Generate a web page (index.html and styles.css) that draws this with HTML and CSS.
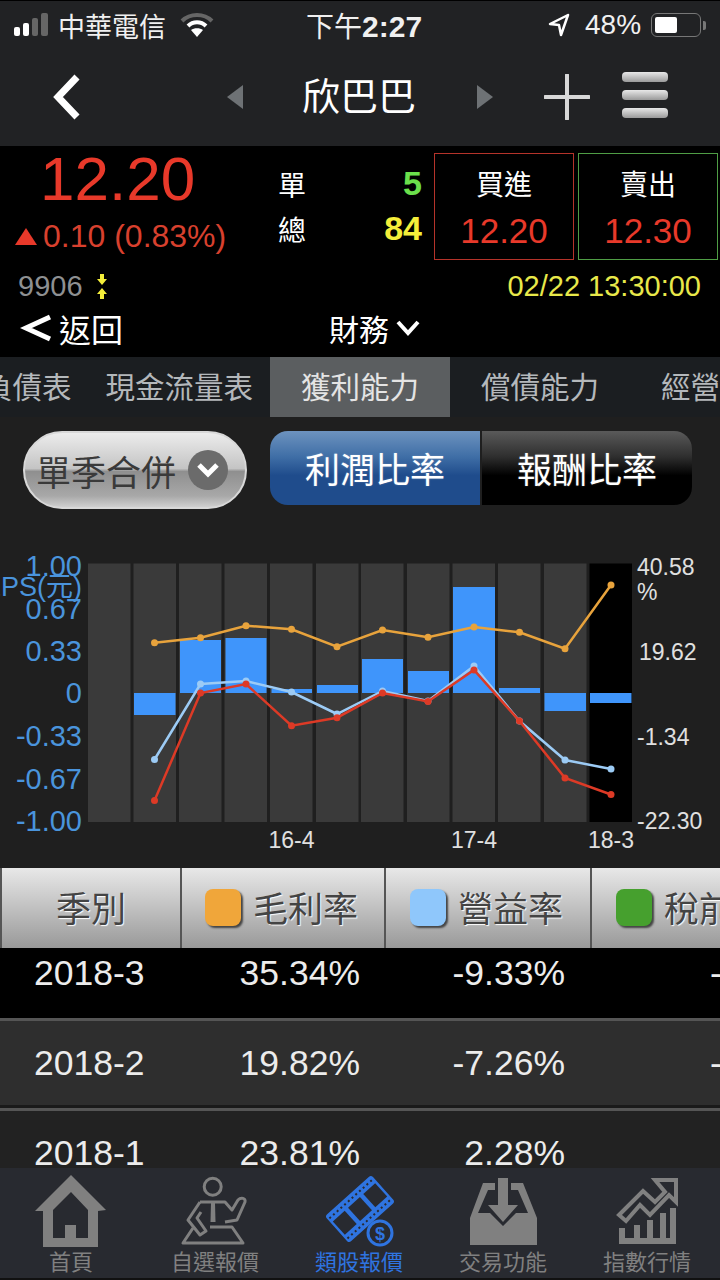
FILE: index.html
```html
<!DOCTYPE html>
<html lang="zh-Hant">
<head>
    <meta charset="UTF-8">
    <meta name="viewport" content="width=device-width, initial-scale=1.0">
    <title>欣巴巴</title>
    <link rel="stylesheet" href="styles.css">
</head>
<body>
<div class="page">

    <!-- status bar -->
    <div class="status">
        <svg class="signal" width="38" height="26" viewBox="0 0 38 26">
            <rect x="0" y="15" width="6" height="9" rx="2" fill="#fff"/>
            <rect x="9" y="11" width="6" height="13" rx="2" fill="#fff"/>
            <rect x="18" y="6" width="6" height="18" rx="2" fill="#666"/>
            <rect x="27" y="1" width="7" height="23" rx="2" fill="#666"/>
        </svg>
        <span class="carrier">中華電信</span>
        <svg class="wifi" width="34" height="26" viewBox="0 0 34 26">
            <path d="M2 9 C10 1 24 1 32 9" fill="none" stroke="#666" stroke-width="4"/>
            <path d="M8 14 C13 9 21 9 26 14" fill="none" stroke="#fff" stroke-width="4"/>
            <path d="M17 25 L11 18 C14 15.500 20 15.500 23 18 Z" fill="#fff"/>
        </svg>
        <span class="clock">下午<b>2:27</b></span>
        <svg class="locate" width="22" height="26" viewBox="0 0 22 26">
            <path d="M20 3 L2 12 L11 13 L13 23 Z" fill="none" stroke="#fff" stroke-width="2.500" stroke-linejoin="round"/>
        </svg>
        <span class="percent">48%</span>
        <div class="battery"><div class="battery_fill"></div></div>
        <div class="battery_tip"></div>
    </div>

    <!-- title bar -->
    <nav class="topnav">
        <svg class="nav_back" width="30" height="46" viewBox="0 0 30 46">
            <path d="M25 3 L6 23 L25 43" fill="none" stroke="#fff" stroke-width="7"/>
        </svg>
        <div class="arrow_left"></div>
        <div class="stock_name">欣巴巴</div>
        <div class="arrow_right"></div>
        <svg class="plus" width="46" height="46" viewBox="0 0 46 46">
            <path d="M23 1 V45 M1 23 H45" stroke="#d8d8d8" stroke-width="4" stroke-linecap="round"/>
        </svg>
        <div class="burger">
            <div class="burger_line"></div>
            <div class="burger_line"></div>
            <div class="burger_line"></div>
        </div>
    </nav>

    <!-- quote -->
    <div class="quote">
        <div class="quote_top">
            <div class="price_box">
                <div class="price">12.20</div>
                <div class="change"><span class="change_up"></span>0.10 (0.83%)</div>
            </div>
            <div class="volume">
                <div class="volume_row"><span>單</span><span class="vol_num green">5</span></div>
                <div class="volume_row"><span>總</span><span class="vol_num yellow">84</span></div>
            </div>
            <div class="trade trade_buy">
                <div class="trade_label">買進</div>
                <div class="trade_price">12.20</div>
            </div>
            <div class="trade trade_sell">
                <div class="trade_label">賣出</div>
                <div class="trade_price">12.30</div>
            </div>
        </div>
        <div class="quote_info">
            <span class="code">9906</span>
            <svg class="code_arrows" width="12" height="25" viewBox="0 0 12 25">
                <path d="M4 0 H8 V5 H11 L6 11 L1 5 H4 Z M6 14 L11 20 H8 V25 H4 V20 H1 Z" fill="#f4ee3a"/>
            </svg>
            <span class="datetime">02/22 13:30:00</span>
        </div>
        <div class="quote_bar">
            <svg class="back_icon" width="32" height="28" viewBox="0 0 32 28">
                <path d="M30 3 L6 14 L30 25" fill="none" stroke="#fff" stroke-width="5"/>
            </svg>
            <span class="back_text">返回</span>
            <span class="finance">財務</span>
            <svg class="finance_icon" width="26" height="18" viewBox="0 0 26 18">
                <path d="M3 3 L13 14 L23 3" fill="none" stroke="#fff" stroke-width="4"/>
            </svg>
        </div>
    </div>

    <!-- tabs -->
    <div class="tabs">
        <div class="tab">負債表</div>
        <div class="tab">現金流量表</div>
        <div class="tab tab_wide active">獲利能力</div>
        <div class="tab tab_wide">償債能力</div>
        <div class="tab tab_wide">經營能力</div>
    </div>

    <!-- filter -->
    <div class="filter">
        <div class="pill">
            <span>單季合併</span>
            <div class="pill_icon">
                <svg width="24" height="16" viewBox="0 0 24 16">
                    <path d="M3 3 L12 12 L21 3" fill="none" stroke="#fff" stroke-width="5"/>
                </svg>
            </div>
        </div>
        <div class="segment">
            <div class="seg seg_on">利潤比率</div>
            <div class="seg seg_off">報酬比率</div>
        </div>
    </div>

    <!-- chart, svg coordinates follow the page -->
    <svg class="chart" width="720" height="323" viewBox="0 545 720 323">
        <g fill="#3a3a3a">
            <rect x="88" y="563.500" width="42.500" height="258.500"/>
            <rect x="133.500" y="563.500" width="42.500" height="258.500"/>
            <rect x="179" y="563.500" width="42.500" height="258.500"/>
            <rect x="224.500" y="563.500" width="42.500" height="258.500"/>
            <rect x="270" y="563.500" width="42.500" height="258.500"/>
            <rect x="316" y="563.500" width="42.500" height="258.500"/>
            <rect x="361" y="563.500" width="42.500" height="258.500"/>
            <rect x="407" y="563.500" width="42.500" height="258.500"/>
            <rect x="452.500" y="563.500" width="42.500" height="258.500"/>
            <rect x="498" y="563.500" width="42.500" height="258.500"/>
            <rect x="544" y="563.500" width="42.500" height="258.500"/>
            <rect x="589.500" y="563.500" width="42.500" height="258.500" fill="#000"/>
        </g>
        <g fill="#3f95fb">
            <rect x="134" y="693" width="41.500" height="22"/>
            <rect x="180" y="640" width="41" height="53"/>
            <rect x="225.500" y="638" width="41" height="55"/>
            <rect x="271.500" y="689" width="40.500" height="4"/>
            <rect x="317" y="685" width="41" height="8"/>
            <rect x="362" y="659" width="41" height="34"/>
            <rect x="408" y="671" width="41" height="22"/>
            <rect x="453" y="587" width="42" height="106"/>
            <rect x="499" y="688" width="41" height="5"/>
            <rect x="544.500" y="693" width="41.500" height="18"/>
            <rect x="590" y="693" width="41.500" height="10"/>
        </g>
        <g class="line" stroke="#e8a33c" fill="#e8a33c">
            <polyline points="154.500,642.700 200.500,637.700 246,625.700 291.500,629.300 337,646.700 382.500,630 428,637.300 474,627 519.500,632.300 565,648.700 611,585"/>
            <circle cx="154.500" cy="642.700" r="3.500"/><circle cx="200.500" cy="637.700" r="3.500"/>
            <circle cx="246" cy="625.700" r="3.500"/><circle cx="291.500" cy="629.300" r="3.500"/>
            <circle cx="337" cy="646.700" r="3.500"/><circle cx="382.500" cy="630" r="3.500"/>
            <circle cx="428" cy="637.300" r="3.500"/><circle cx="474" cy="627" r="3.500"/>
            <circle cx="519.500" cy="632.300" r="3.500"/><circle cx="565" cy="648.700" r="3.500"/>
            <circle cx="611" cy="585" r="3.500"/>
        </g>
        <g class="line" stroke="#9ccbf5" fill="#9ccbf5">
            <polyline points="154.500,759.500 200.500,684 246,681 291.500,692 337,714 382.500,691 428,701 474,666 519.500,721 565,760 611,769"/>
            <circle cx="154.500" cy="759.500" r="3.500"/><circle cx="200.500" cy="684" r="3.500"/>
            <circle cx="246" cy="681" r="3.500"/><circle cx="291.500" cy="692" r="3.500"/>
            <circle cx="337" cy="714" r="3.500"/><circle cx="382.500" cy="691" r="3.500"/>
            <circle cx="428" cy="701" r="3.500"/><circle cx="474" cy="666" r="3.500"/>
            <circle cx="519.500" cy="721" r="3.500"/><circle cx="565" cy="760" r="3.500"/>
            <circle cx="611" cy="769" r="3.500"/>
        </g>
        <g class="line" stroke="#dd3a26" fill="#dd3a26">
            <polyline points="154.500,800.500 200.500,693 246,684 291.500,725.700 337,717.700 382.500,693 428,701.500 474,670 519.500,721 565,778 611,794.500"/>
            <circle cx="154.500" cy="800.500" r="3.500"/><circle cx="200.500" cy="693" r="3.500"/>
            <circle cx="246" cy="684" r="3.500"/><circle cx="291.500" cy="725.700" r="3.500"/>
            <circle cx="337" cy="717.700" r="3.500"/><circle cx="382.500" cy="693" r="3.500"/>
            <circle cx="428" cy="701.500" r="3.500"/><circle cx="474" cy="670" r="3.500"/>
            <circle cx="519.500" cy="721" r="3.500"/><circle cx="565" cy="778" r="3.500"/>
            <circle cx="611" cy="794.500" r="3.500"/>
        </g>
        <g class="axis_left">
            <text x="82" y="576">1.00</text>
            <text class="axis_unit" x="82" y="596">EPS(元)</text>
            <text x="82" y="619">0.67</text>
            <text x="82" y="661">0.33</text>
            <text x="82" y="703">0</text>
            <text x="82" y="746">-0.33</text>
            <text x="82" y="789">-0.67</text>
            <text x="82" y="831">-1.00</text>
        </g>
        <g class="axis_right">
            <text x="637" y="575">40.58</text>
            <text x="637" y="600">%</text>
            <text x="639" y="660">19.62</text>
            <text x="637" y="745">-1.34</text>
            <text x="637" y="829">-22.30</text>
        </g>
        <g class="axis_bottom">
            <text x="291.500" y="848">16-4</text>
            <text x="474" y="848">17-4</text>
            <text x="611" y="848">18-3</text>
        </g>
    </svg>

    <!-- table -->
    <div class="table_head">
        <div class="th th_season">季別</div>
        <div class="th th_col"><span class="swatch orange"></span>毛利率</div>
        <div class="th th_col th_col3"><span class="swatch sky"></span>營益率</div>
        <div class="th th_col th_col3"><span class="swatch leaf"></span>稅前淨利率</div>
    </div>
    <div class="table_body">
        <div class="row row_black">
            <div class="cell_season">2018-3</div>
            <div class="cell_num">35.34%</div>
            <div class="cell_num">-9.33%</div>
            <div class="cell_cut">-</div>
        </div>
        <div class="row row_grey">
            <div class="cell_season">2018-2</div>
            <div class="cell_num">19.82%</div>
            <div class="cell_num">-7.26%</div>
            <div class="cell_cut">-</div>
        </div>
        <div class="row row_dark">
            <div class="cell_season">2018-1</div>
            <div class="cell_num">23.81%</div>
            <div class="cell_num">2.28%</div>
            <div class="cell_cut"></div>
        </div>
    </div>

    <!-- bottom tab bar -->
    <div class="bottom">
        <div class="bottom_item">
            <svg width="80" height="74" viewBox="0 0 80 74">
                <path fill="#808080" fill-rule="evenodd" d="M40 1 L75 36 L67 37 V73 H12 V37 H4 Z M40 18 L22 36 V64 H34 V51 H45 V64 H57 V36 Z"/>
            </svg>
            <span>首頁</span>
        </div>
        <div class="bottom_item">
            <svg width="80" height="74" viewBox="175 1174 80 74">
                <g fill="none" stroke="#808080" stroke-width="3" stroke-linejoin="round">
                    <circle cx="212.700" cy="1186.700" r="8.500"/>
                    <path d="M200 1202 H225 L232 1210 L238 1200 C241 1197 246 1198 245 1202 L237 1220 L225 1222"/>
                    <path d="M200 1202 L188 1220 L200 1235 L206 1231 L197 1218 L201 1212"/>
                    <path d="M193 1228 L183 1243 H243 L232 1227 H210"/>
                </g>
                <path d="M211 1203 H215 L215.500 1222 H210.500 Z" fill="#808080"/>
            </svg>
            <span>自選報價</span>
        </div>
        <div class="bottom_item bottom_on">
            <svg width="80" height="74" viewBox="319 1174 80 74">
                <g transform="rotate(-42 360 1209)">
                    <rect x="329" y="1191" width="62" height="36" rx="3" fill="#2f74e0"/>
                    <rect x="331.500" y="1200" width="16" height="18" fill="#282a30"/>
                    <rect x="352" y="1200" width="16" height="18" fill="#282a30"/>
                    <rect x="372.500" y="1200" width="16" height="18" fill="#282a30"/>
                    <path d="M331 1195.500 H389 M331 1222.500 H389" stroke="#282a30" stroke-width="2" stroke-dasharray="2 3"/>
                </g>
                <circle cx="380" cy="1233" r="12" fill="#282a30" stroke="#2f74e0" stroke-width="3"/>
                <text class="dollar" x="380" y="1240">$</text>
            </svg>
            <span>類股報價</span>
        </div>
        <div class="bottom_item">
            <svg width="80" height="74" viewBox="463 1174 80 74">
                <path fill="#808080" d="M470 1245 V1218 L483 1183 H495 V1190 H488 L478 1213 H490 L503 1226 L516 1213 H528 L518 1190 H511 V1183 H523 L537 1218 V1245 Z"/>
                <path fill="#808080" d="M498 1178 H508 V1205 H518 L503 1222 L488 1205 H498 Z"/>
            </svg>
            <span>交易功能</span>
        </div>
        <div class="bottom_item">
            <svg width="80" height="74" viewBox="607 1174 80 74">
                <path fill="none" stroke="#808080" stroke-width="4" d="M619 1215 L643 1191 L655 1202 L665 1192 L655 1180 H676 V1202 L669 1195 L650 1215 L640 1205 L626 1221 Z"/>
                <path fill="#808080" d="M619 1228 H625 V1238 H634 V1225 H640 V1238 H647 V1220 H653 V1238 H660 V1213 H666 V1238 H670 V1208 H676 V1244 H619 Z"/>
            </svg>
            <span>指數行情</span>
        </div>
    </div>

</div>
</body>
</html>
```

FILE: styles.css
```css
*{
    box-sizing: border-box;
}
body{
    margin: 0;
    background-color: #1f1f1f;
    font-family: "Liberation Sans", "Noto Sans CJK TC", sans-serif;
    color: #fff;
}
.page{
    width: 720px;
    height: 1280px;
    overflow: hidden;
}

/* status bar */
.status{
    height: 52px;
    padding: 0 0 3px 14px;
    background-color: #212224;
    border-top: 1px solid #000;
    display: flex;
    align-items: center;
    font-size: 27px;
    color: #f0f0f0;
}
.carrier{
    margin-left: 6px;
    width: 108px;
}
.wifi{
    margin-left: 14px;
}
.clock{
    margin-left: 92px;
    width: 122px;
    font-size: 28px;
}
.clock b{
    font-size: 30px;
    font-weight: bold;
}
.locate{
    margin-left: 120px;
}
.percent{
    margin-left: 15px;
    font-size: 28px;
}
.battery{
    width: 50px;
    height: 24px;
    margin-left: 10px;
    padding: 3px;
    border: 1.5px solid #777;
    border-radius: 6px;
}
.battery_fill{
    width: 22px;
    height: 100%;
    background-color: #fff;
    border-radius: 2px;
}
.battery_tip{
    width: 3px;
    height: 9px;
    margin-left: 2px;
    background-color: #777;
    border-radius: 0 2px 2px 0;
}

/* title bar */
.topnav{
    height: 94px;
    padding-bottom: 5px;
    background-color: #212224;
    display: flex;
    align-items: center;
}
.nav_back{
    margin-left: 52px;
}
.arrow_left{
    margin-left: 145px;
    border-right: 16px solid #6e7275;
    border-top: 12px solid transparent;
    border-bottom: 12px solid transparent;
}
.stock_name{
    width: 114px;
    margin-left: 59px;
    font-size: 38px;
    line-height: 50px;
    white-space: nowrap;
}
.arrow_right{
    margin-left: 61px;
    border-left: 16px solid #6e7275;
    border-top: 12px solid transparent;
    border-bottom: 12px solid transparent;
}
.plus{
    margin-left: 51px;
}
.burger{
    width: 46px;
    margin-left: 32px;
    margin-bottom: 3px;
    display: flex;
    flex-direction: column;
    gap: 8px;
}
.burger_line{
    height: 10px;
    border-radius: 4px;
    background: linear-gradient(#e8e8e8, #9a9a9a);
}

/* quote */
.quote{
    height: 211px;
    background-color: #000;
    padding-top: 7px;
}
.quote_top{
    display: flex;
    height: 107px;
}
.price_box{
    width: 278px;
}
.price{
    margin-top: -3px;
    margin-left: 40px;
    font-size: 62px;
    line-height: 58px;
    color: #e8392a;
}
.change{
    margin-top: 9px;
    margin-left: 15px;
    font-size: 32px;
    line-height: 38px;
    color: #d8402e;
    display: flex;
    align-items: center;
    white-space: nowrap;
}
.change_up{
    margin-right: 6px;
    border-bottom: 17px solid #e8392a;
    border-left: 11px solid transparent;
    border-right: 11px solid transparent;
}
.volume{
    width: 144px;
    padding-top: 8px;
    font-size: 28px;
}
.volume_row{
    height: 45px;
    display: flex;
    justify-content: space-between;
    align-items: center;
}
.vol_num{
    font-size: 34px;
    font-weight: bold;
}
.green{
    color: #6be04c;
}
.yellow{
    color: #f4ee3a;
}
.trade{
    width: 140px;
    border: 1px solid;
    text-align: center;
}
.trade_buy{
    margin-left: 12px;
    border-color: #b5332a;
}
.trade_sell{
    margin-left: 4px;
    border-color: #4f9d45;
}
.trade_label{
    margin-top: 9px;
    font-size: 28px;
    line-height: 46px;
}
.trade_price{
    font-size: 35px;
    line-height: 44px;
    color: #e8392a;
}
.quote_info{
    height: 34px;
    margin-top: 9px;
    padding: 0 19px 0 18px;
    font-size: 29px;
    display: flex;
    align-items: center;
}
.code{
    color: #8e9092;
}
.code_arrows{
    margin-left: 13px;
}
.datetime{
    margin-left: auto;
    color: #e8e84a;
}
.quote_bar{
    height: 46px;
    margin-top: 2px;
    display: flex;
    align-items: center;
}
.back_icon{
    margin-left: 20px;
}
.back_text{
    margin-left: 7px;
    font-size: 32px;
}
.finance{
    margin-left: 206px;
    font-size: 30px;
}
.finance_icon{
    margin-left: 6px;
}

/* tabs */
.tabs{
    height: 60px;
    margin-left: -34px;
    width: 900px;
    background-color: #1b1e21;
    display: flex;
    align-items: stretch;
    font-size: 29.500px;
    color: #b4b8bb;
}
.tab{
    padding: 0 17px;
    line-height: 62px;
    white-space: nowrap;
}
.tab_wide{
    padding: 0 31px;
}
.active{
    background-color: #5b5e60;
    color: #e4e4e4;
}

/* filter */
.filter{
    height: 128px;
    padding: 14px 0 0 23px;
    display: flex;
    align-items: flex-start;
    background-color: #1f1f1f;
}
.pill{
    width: 224px;
    height: 78px;
    padding: 0 17px 0 11px;
    border: 2px solid #d8d8d8;
    border-radius: 39px;
    background: linear-gradient(#ececec 0%, #c4c4c4 48%, #8f8f8f 52%, #a8a8a8 85%, #cfcfcf 100%);
    display: flex;
    align-items: center;
    justify-content: space-between;
    font-size: 35px;
    color: #3a3a3a;
}
.pill_icon{
    width: 40px;
    height: 40px;
    border-radius: 50%;
    background-color: #6b6b6b;
    display: flex;
    align-items: center;
    justify-content: center;
}
.segment{
    width: 422px;
    height: 74px;
    margin-left: 23px;
    display: flex;
    gap: 2px;
    font-size: 35px;
}
.seg{
    flex: 1;
    text-align: center;
    line-height: 80px;
    text-shadow: 0 0 2px rgba(255, 255, 255, 0.25);
}
.seg_on{
    border-radius: 18px 0 0 18px;
    background: linear-gradient(#6d93bf 0%, #3f6ea6 35%, #1f4c8c 60%, #1f4c8c 100%);
}
.seg_off{
    border-radius: 0 18px 18px 0;
    background: linear-gradient(#5a5a5a 0%, #2e2e2e 35%, #000 60%, #000 100%);
}

/* chart */
.chart{
    display: block;
}
.line polyline{
    fill: none;
    stroke-width: 2.500;
}
.line circle{
    stroke: none;
}
.axis_left text{
    font-size: 29px;
    fill: #4a94dc;
    text-anchor: end;
}
.axis_left .axis_unit{
    font-size: 27px;
}
.axis_right text{
    font-size: 23px;
    fill: #e0e0e0;
}
.axis_bottom text{
    font-size: 23px;
    fill: #e0e0e0;
    text-anchor: middle;
}

/* table */
.table_head{
    height: 80px;
    padding-left: 2px;
    display: flex;
    gap: 2px;
    overflow: hidden;
    background-color: #555;
    color: #444;
    font-size: 35px;
}
.th{
    height: 80px;
    padding-bottom: 4px;
    background: linear-gradient(#e8e8e8, #999);
    display: flex;
    align-items: center;
    flex-shrink: 0;
    white-space: nowrap;
    text-shadow: 1px 1px 1px #fff;
}
.th_season{
    width: 178px;
    justify-content: center;
}
.th_col{
    width: 202px;
    padding-left: 23px;
}
.th_col3{
    width: 204px;
    padding-left: 24px;
}
.swatch{
    width: 36px;
    height: 37px;
    margin-top: 3px;
    margin-right: 12px;
    flex-shrink: 0;
    border-radius: 8px;
    box-shadow: 2px 2px 2px #444;
}
.orange{
    background-color: #f0a63a;
}
.sky{
    background-color: #8fc7fb;
}
.leaf{
    background-color: #46a02e;
}
.table_body{
    height: 220px;
    overflow: hidden;
    background-color: #000;
}
.row{
    height: 90px;
    padding-bottom: 2px;
    display: grid;
    grid-template-columns: 146px 214px 205px 1fr;
    align-items: center;
    border-bottom: 3px solid #555;
    font-size: 35.500px;
    color: #ececec;
}
.row_black{
    margin-top: -17px;
    background-color: #000;
}
.row_grey{
    background-color: #2e2e2e;
    box-shadow: inset 0 -3px 0 #1a1a1a;
}
.row_dark{
    background-color: #222;
}
.cell_season{
    padding-left: 34px;
}
.cell_num{
    text-align: right;
}
.cell_cut{
    padding-left: 145px;
}

/* bottom tabs */
.bottom{
    height: 112px;
    margin-left: -1px;
    width: 721px;
    padding-top: 6px;
    background-color: #282a30;
    border-bottom: 2px solid #111;
    display: flex;
}
.bottom_item{
    width: 144px;
    display: flex;
    flex-direction: column;
    align-items: center;
    font-size: 22px;
    line-height: 30px;
    color: #808080;
}
.bottom_item svg{
    flex-shrink: 0;
}
.bottom_on{
    color: #2f74e0;
}
.dollar{
    font-size: 18px;
    font-weight: bold;
    fill: #2f74e0;
    text-anchor: middle;
}
```
